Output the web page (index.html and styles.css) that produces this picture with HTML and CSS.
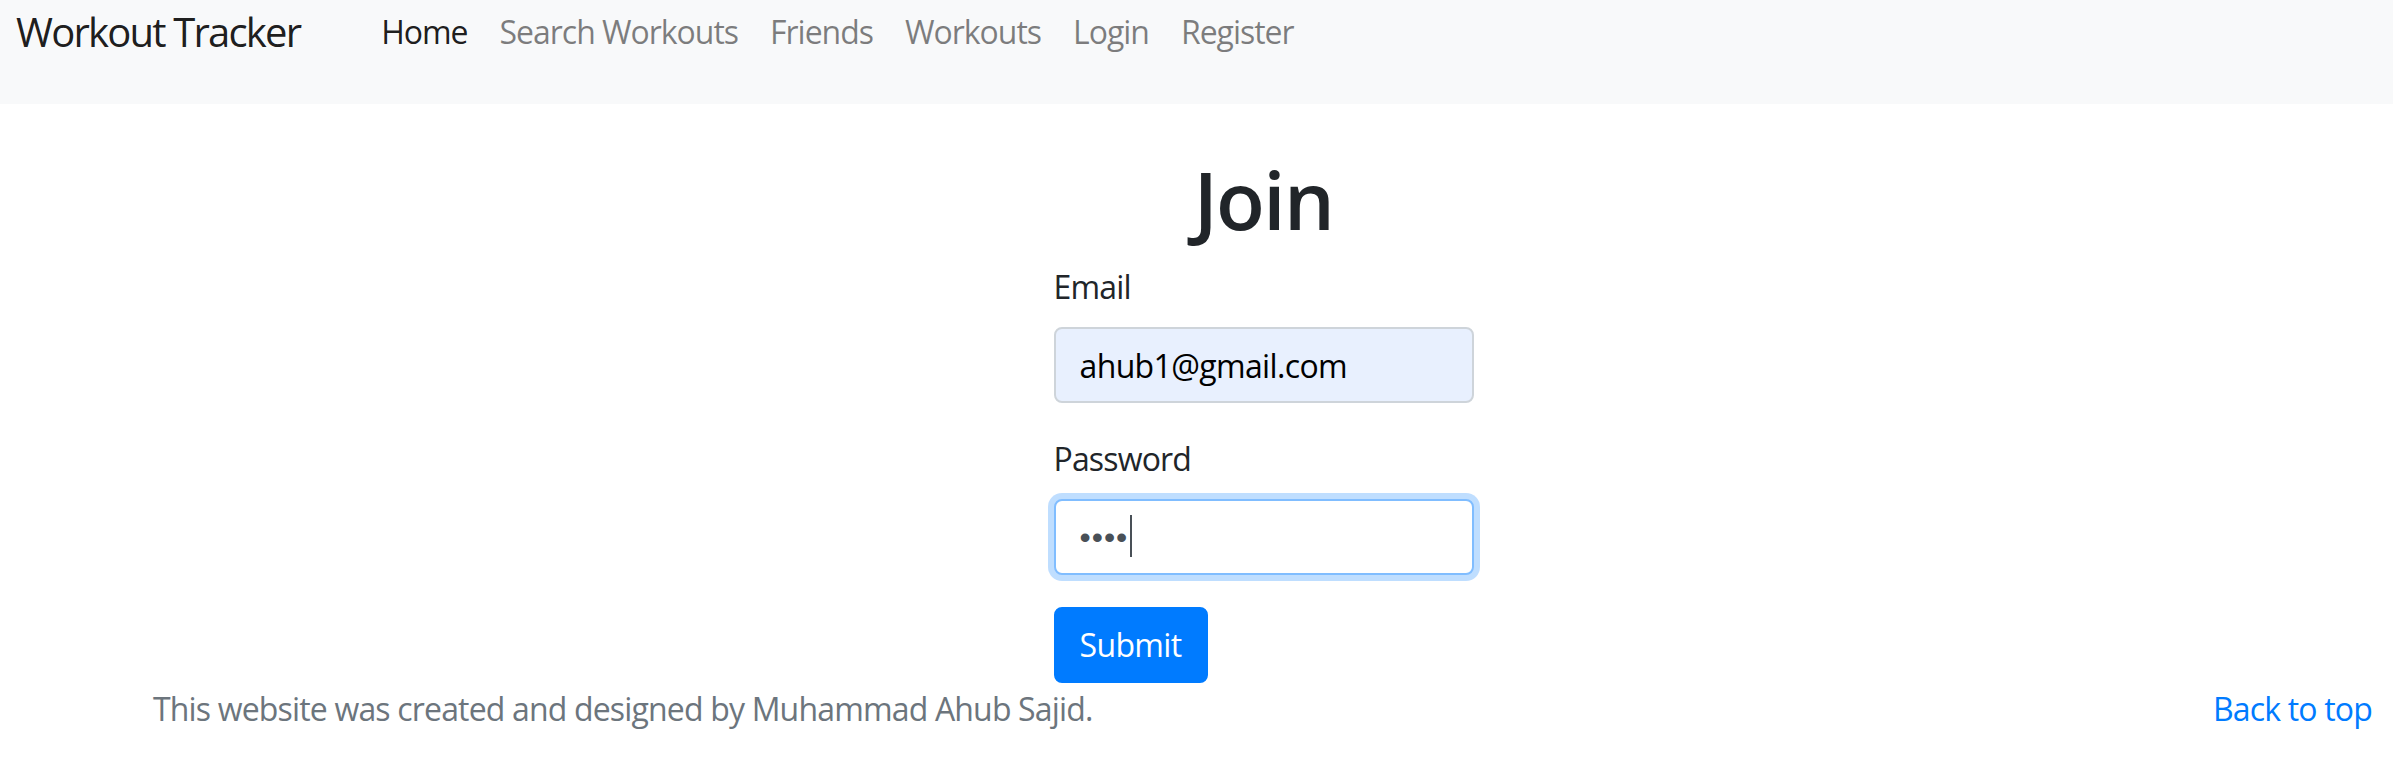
FILE: index.html
```html
<!DOCTYPE html>
<html lang="en">
<head>
<meta charset="utf-8">
<title>Workout Tracker - Join</title>
<link rel="stylesheet" href="styles.css">
</head>
<body>
<nav class="navbar">
  <a class="brand" href="#">Workout Tracker</a>
  <ul class="nav">
    <li><a class="nav-link active" href="#">Home</a></li>
    <li><a class="nav-link" href="#">Search Workouts</a></li>
    <li><a class="nav-link" href="#">Friends</a></li>
    <li><a class="nav-link" href="#">Workouts</a></li>
    <li><a class="nav-link" href="#">Login</a></li>
    <li><a class="nav-link" href="#">Register</a></li>
  </ul>
</nav>
<main class="page">
  <form class="join-form">
    <h1 class="title">Join</h1>
    <div class="form-group">
      <label class="label" for="email">Email</label>
      <input class="control control-autofill" id="email" type="email" value="ahub1@gmail.com">
    </div>
    <div class="form-group">
      <label class="label" for="password">Password</label>
      <div class="control-wrap">
        <input class="control control-focus" id="password" type="password" value="abcd">
        <span class="caret"></span>
      </div>
    </div>
    <button class="btn" type="button">Submit</button>
  </form>
</main>
<footer class="footer">
  <p class="credit">This website was created and designed by Muhammad Ahub Sajid.</p>
  <a class="back" href="#">Back to top</a>
</footer>
</body>
</html>
```
FILE: styles.css
```css
* { box-sizing: border-box; }

body {
  margin: 0;
  background: #fff;
  color: #212529;
  font-family: "Segoe UI", "Open Sans", "Noto Sans", sans-serif;
  font-size: 32px;
  line-height: 1.5;
  letter-spacing: -0.026em;
}

a { text-decoration: none; }

.navbar {
  display: flex;
  align-items: center;
  height: 104px;
  padding: 2px 0 42px 16px;
  background: #f8f9fa;
}

.brand {
  font-size: 40px;
  line-height: 60px;
  letter-spacing: -0.045em;
  color: rgba(0, 0, 0, 0.9);
  margin-right: 65px;
}

.nav {
  display: flex;
  list-style: none;
  margin: 0;
  padding: 0;
}

.nav-link {
  display: block;
  padding: 8px 16px;
  letter-spacing: -0.032em;
  color: rgba(0, 0, 0, 0.5);
}

.nav-link.active { color: rgba(0, 0, 0, 0.9); }

.page {
  display: flex;
  justify-content: center;
  padding: 47px 0 0 134px;
}

.join-form {
  width: 420px;
}

.title {
  margin: 0 0 16px;
  font-size: 80px;
  font-weight: 600;
  line-height: 1.2;
  letter-spacing: -0.02em;
  text-align: center;
}

.form-group { margin-bottom: 32px; }

.label {
  display: inline-block;
  margin-bottom: 16px;
}

.control {
  display: block;
  width: 100%;
  height: 76px;
  padding: 12px 24px;
  font-family: inherit;
  font-size: 32px;
  line-height: 1.5;
  letter-spacing: -0.02em;
  color: #495057;
  background: #fff;
  border: 2px solid #ced4da;
  border-radius: 8px;
  outline: none;
}

.control-autofill {
  background: #e8f0fe;
  color: #000;
}

.control-focus {
  border-color: #80bdff;
  box-shadow: 0 0 0 6px rgba(0, 123, 255, 0.25);
  font-family: "Liberation Sans", Arial, sans-serif;
  letter-spacing: 1px;
}

.control-wrap { position: relative; }

.caret {
  position: absolute;
  left: 76px;
  top: 16px;
  width: 2px;
  height: 42px;
  background: #495057;
}

.btn {
  display: inline-block;
  padding: 12px 24px;
  font-family: inherit;
  font-size: 32px;
  line-height: 1.5;
  letter-spacing: -0.02em;
  color: #fff;
  background: #007bff;
  border: 2px solid #007bff;
  border-radius: 8px;
}

.footer {
  display: flex;
  justify-content: space-between;
  align-items: baseline;
  padding: 0 21px 0 153px;
  margin-top: 2px;
}

.credit {
  margin: 0;
  color: #6c757d;
}

.back { color: #007bff; }
```
